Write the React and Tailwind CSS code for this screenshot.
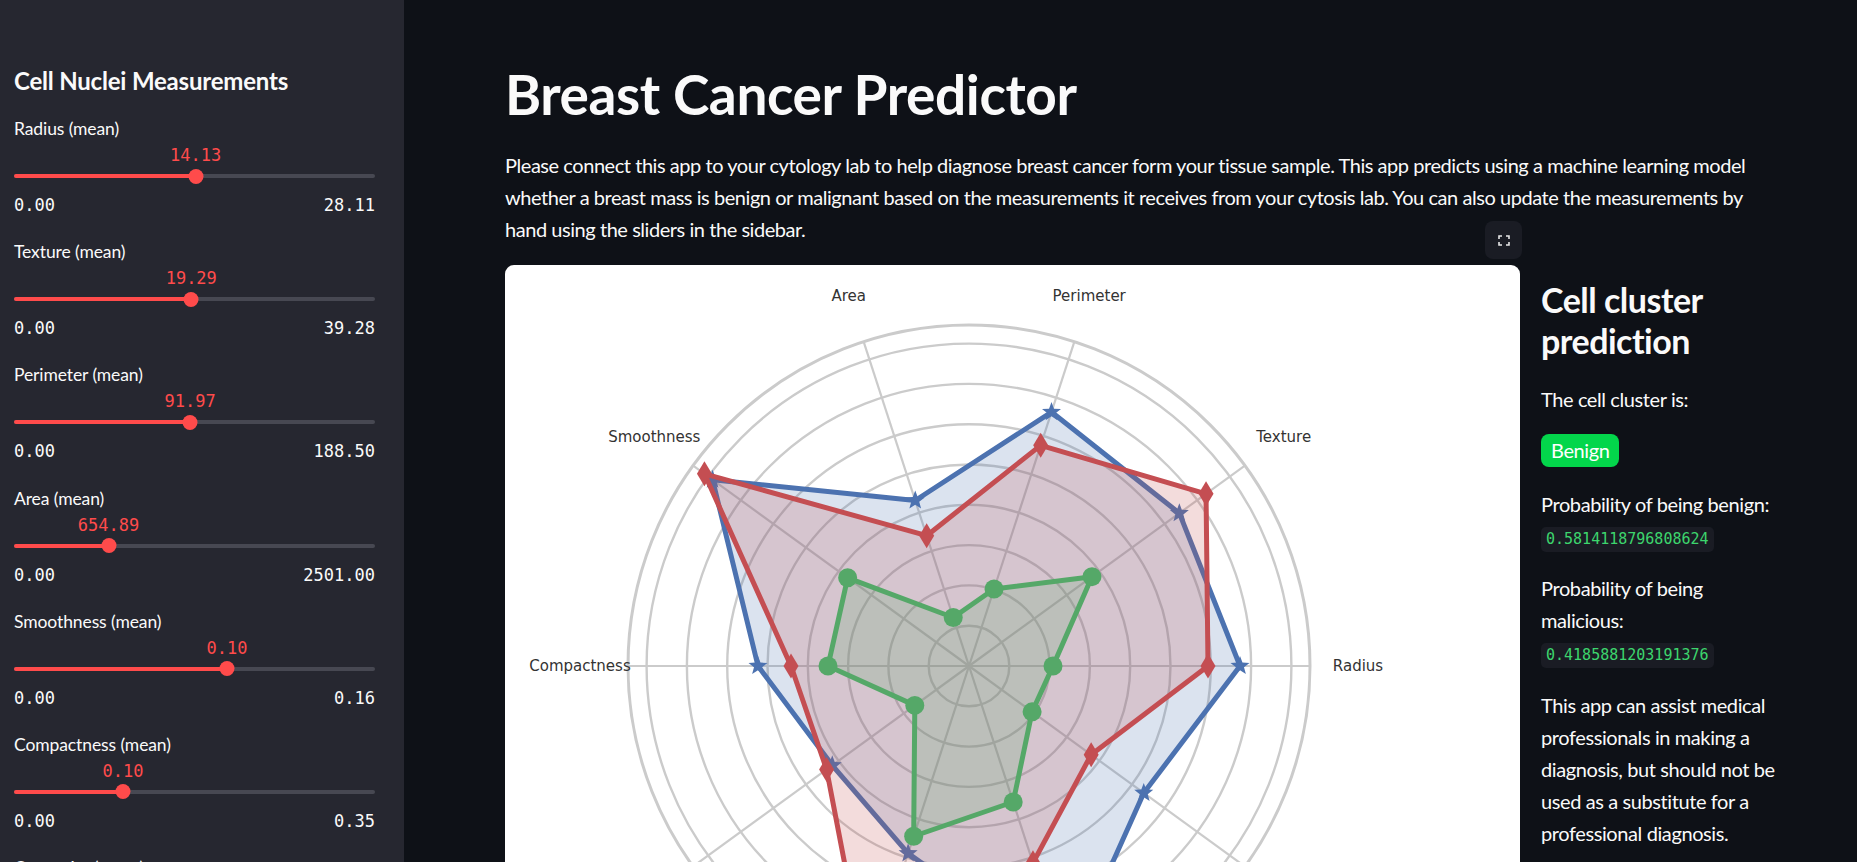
import React from 'react';

const sliders = [
  { label: 'Radius (mean)', value: '14.13', min: '0.00', max: '28.11', pct: 50.3 },
  { label: 'Texture (mean)', value: '19.29', min: '0.00', max: '39.28', pct: 49.1 },
  { label: 'Perimeter (mean)', value: '91.97', min: '0.00', max: '188.50', pct: 48.8 },
  { label: 'Area (mean)', value: '654.89', min: '0.00', max: '2501.00', pct: 26.2 },
  { label: 'Smoothness (mean)', value: '0.10', min: '0.00', max: '0.16', pct: 59.0 },
  { label: 'Compactness (mean)', value: '0.10', min: '0.00', max: '0.35', pct: 30.2 },
  { label: 'Concavity (mean)', value: '0.09', min: '0.00', max: '0.43', pct: 20.7 }
];

const CX = 464;
const CY = 401;
const axes = [
  'Radius',
  'Texture',
  'Perimeter',
  'Area',
  'Smoothness',
  'Compactness',
  'Concavity',
  'Concave Points',
  'Symmetry',
  'Fractal Dimension'
];

const series = [
  { color: '#4c72b0', marker: 'star', r: [271, 260, 267, 174, 317, 211, 169, 197, 315, 216] },
  { color: '#c44e52', marker: 'diamond', r: [239, 293, 232, 137, 327, 178, 176, 330, 207, 151] },
  { color: '#55a868', marker: 'circle', r: [84, 152, 81, 51, 150, 141, 67, 179, 143, 78] }
];

const pt = (i, r) => {
  const a = (i * 36 * Math.PI) / 180;
  return [CX + r * Math.cos(a), CY - r * Math.sin(a)];
};

const starPoints = (x, y, ro = 10, ri = 4.2) =>
  Array.from({ length: 10 }, (_, k) => {
    const rr = k % 2 === 0 ? ro : ri;
    const a = ((-90 + k * 36) * Math.PI) / 180;
    return `${x + rr * Math.cos(a)},${y + rr * Math.sin(a)}`;
  }).join(' ');

const diamondPoints = (x, y) => `${x},${y - 12.5} ${x + 7.5},${y} ${x},${y + 12.5} ${x - 7.5},${y}`;

function Marker({ type, x, y, color }) {
  if (type === 'star') return <polygon points={starPoints(x, y)} fill={color} />;
  if (type === 'diamond') return <polygon points={diamondPoints(x, y)} fill={color} />;
  return <circle cx={x} cy={y} r="9.5" fill={color} />;
}

function RadarChart() {
  const rings = [1, 2, 3, 4, 5, 6, 7, 8].map(k => k * 40.3);

  return (
    <svg width="1015" height="640" viewBox="0 0 1015 640" className="block">
      {rings.map(r => (
        <circle key={r} cx={CX} cy={CY} r={r} fill="none" stroke="#cbcbcb" strokeWidth="2.4" />
      ))}
      <circle cx={CX} cy={CY} r="341" fill="none" stroke="#cbcbcb" strokeWidth="3" />
      {axes.map((name, i) => {
        const [x, y] = pt(i, 341);
        return <line key={name} x1={CX} y1={CY} x2={x} y2={y} stroke="#cbcbcb" strokeWidth="2.2" />;
      })}
      {axes.map((name, i) => {
        const [x, y] = pt(i, 389);
        return (
          <text
            key={name}
            x={x}
            y={y}
            textAnchor="middle"
            dominantBaseline="central"
            fontFamily="'DejaVu Sans', sans-serif"
            fontSize="15"
            fill="#333333"
          >
            {name}
          </text>
        );
      })}
      {series.map(s => {
        const pts = s.r.map((r, i) => pt(i, r));
        const str = pts.map(p => p.join(',')).join(' ');
        return (
          <g key={s.color}>
            <polygon points={str} fill={s.color} fillOpacity="0.2" />
            <polygon points={str} fill="none" stroke={s.color} strokeWidth="5" strokeLinejoin="round" />
            {pts.map(([x, y], i) => (
              <Marker key={i} type={s.marker} x={x} y={y} color={s.color} />
            ))}
          </g>
        );
      })}
    </svg>
  );
}

function Slider({ item }) {
  return (
    <div className="h-[123.2px]">
      <div className="h-[22px] text-[17.5px] leading-[22px] tracking-[-0.1px]">{item.label}</div>
      <div className="relative h-[55px]">
        <div
          className="absolute top-[5px] -translate-x-1/2 font-['DejaVu_Sans_Mono',monospace] text-[17px] leading-[20px] text-[#ff4b4b]"
          style={{ left: `${item.pct}%` }}
        >
          {item.value}
        </div>
        <div className="absolute top-[34px] h-[4px] w-full rounded-full bg-[#474852]">
          <div className="h-full rounded-full bg-[#ff4b4b]" style={{ width: `${item.pct}%` }} />
        </div>
        <div
          className="absolute top-[28.5px] h-[15px] w-[15px] -translate-x-1/2 rounded-full bg-[#ff4b4b]"
          style={{ left: `${item.pct}%` }}
        />
      </div>
      <div className="flex justify-between font-['DejaVu_Sans_Mono',monospace] text-[17px] leading-[20px]">
        <span>{item.min}</span>
        <span>{item.max}</span>
      </div>
    </div>
  );
}

export default function App() {
  return (
    <div className="flex h-screen w-full overflow-hidden bg-[#0e1117] font-[Lato,sans-serif] text-[#fafafa]">
      <aside className="w-[404px] shrink-0 bg-[#262730] pl-[14px] pr-[29px] pt-[65px]">
        <h2 className="text-[24px] font-bold leading-[31px] tracking-[-0.2px]">Cell Nuclei Measurements</h2>
        <div className="mt-[22px]">
          {sliders.map(item => (
            <Slider key={item.label} item={item} />
          ))}
        </div>
      </aside>

      <main className="flex-1 pl-[101px] pr-[62px] pt-[61px]">
        <h1 className="text-[55px] font-bold leading-[66px] tracking-[-0.4px]">Breast Cancer Predictor</h1>
        <p className="mt-[22px] text-[20px] leading-[32px] tracking-[-0.45px]">
          Please connect this app to your cytology lab to help diagnose breast cancer form your tissue sample. This
          app predicts using a machine learning model
          <br />
          whether a breast mass is benign or malignant based on the measurements it receives from your cytosis lab.
          You can also update the measurements by
          <br />
          hand using the sliders in the sidebar.
        </p>

        <div className="mt-[20px] flex gap-[21px]">
          <div className="relative w-[1015px] shrink-0">
            <button
              type="button"
              className="absolute right-[-2px] top-[-44px] flex h-[38px] w-[37px] items-center justify-center rounded-lg bg-[#1a1c24]"
            >
              <svg width="12" height="11" viewBox="0 0 12 11" fill="none" stroke="#e6e6e6" strokeWidth="1.6">
                <path d="M1 4V1h3M8 1h3v3M11 7v3H8M4 10H1V7" />
              </svg>
            </button>
            <div className="h-[640px] overflow-hidden rounded-[9px] bg-white">
              <RadarChart />
            </div>
          </div>

          <div className="min-w-0 flex-1 pt-[14px] text-[20px] leading-[32px] tracking-[-0.4px]">
            <h3 className="text-[34px] font-bold leading-[41px] tracking-[-0.5px]">Cell cluster prediction</h3>
            <p className="mt-[22px]">The cell cluster is:</p>
            <div className="mt-[19px] inline-block h-[33px] rounded-lg bg-[#03d64b] px-[10px] leading-[33px] text-white">
              Benign
            </div>
            <p className="mt-[21px]">Probability of being benign:</p>
            <div className="mt-[4px] inline-block h-[25px] rounded-[5px] bg-[#1a1c24] px-[5px] font-['DejaVu_Sans_Mono',monospace] text-[15px] leading-[25px] tracking-normal text-[#3dd56d]">
              0.5814118796808624
            </div>
            <p className="mt-[20px]">
              Probability of being
              <br />
              malicious:
            </p>
            <div className="mt-[5px] inline-block h-[25px] rounded-[5px] bg-[#1a1c24] px-[5px] font-['DejaVu_Sans_Mono',monospace] text-[15px] leading-[25px] tracking-normal text-[#3dd56d]">
              0.4185881203191376
            </div>
            <p className="mt-[21px]">
              This app can assist medical professionals in making a diagnosis, but should not be used as a substitute
              for a professional diagnosis.
            </p>
          </div>
        </div>
      </main>
    </div>
  );
}
